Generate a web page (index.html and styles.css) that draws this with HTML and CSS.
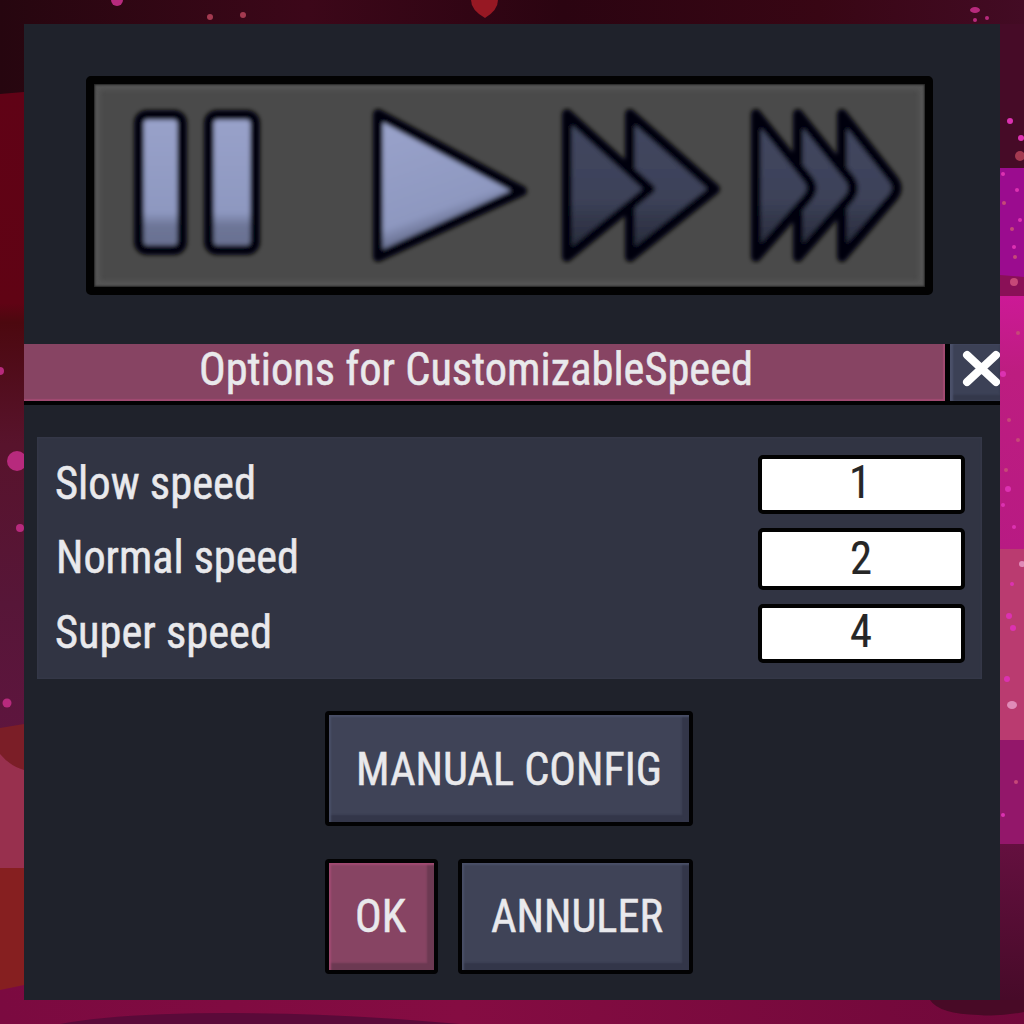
FILE: index.html
```html
<!DOCTYPE html>
<html lang="en">
<head>
<meta charset="utf-8">
<title>Options for CustomizableSpeed</title>
<link rel="stylesheet" href="styles.css">
</head>
<body>
<svg class="backdrop" viewBox="0 0 1024 1024" aria-hidden="true">
  <defs>
    <linearGradient id="topG"><stop offset="0" stop-color="#26060f"/><stop offset=".3" stop-color="#3c0719"/><stop offset=".55" stop-color="#2b0411"/><stop offset=".8" stop-color="#380614"/><stop offset="1" stop-color="#430b24"/></linearGradient>
    <linearGradient id="leftG" x2="0" y2="1"><stop offset="0" stop-color="#600216"/><stop offset=".33" stop-color="#600314"/><stop offset=".36" stop-color="#4c080f"/><stop offset=".55" stop-color="#58132c"/><stop offset=".8" stop-color="#571638"/><stop offset="1" stop-color="#5e153e"/></linearGradient>
    <linearGradient id="pinkG" x2="0" y2="1"><stop offset="0" stop-color="#cc1996"/><stop offset=".3" stop-color="#bd1d80"/><stop offset="1" stop-color="#b81a83"/></linearGradient>
    <linearGradient id="lowG" x2="0" y2="1"><stop offset="0" stop-color="#64103f"/><stop offset="1" stop-color="#460a28"/></linearGradient>
    <linearGradient id="botG"><stop offset="0" stop-color="#7b0a40"/><stop offset=".45" stop-color="#850c42"/><stop offset="1" stop-color="#70083a"/></linearGradient>
  </defs>
  <rect width="1024" height="1024" fill="url(#topG)"/>
  <path d="M0 94l24-2v640H0z" fill="url(#leftG)"/>
  <path d="M0 728l24-4v60H0z" fill="#7b1e27"/>
  <path d="M0 754q10 12 24 16v110H0z" fill="#98304e"/>
  <path d="M0 868h24v124H0z" fill="#861f20"/>
  <path d="M1000 24h24v150h-24z" fill="#460b27"/>
  <path d="M1000 168h24v112h-24z" fill="#9b0c8f"/>
  <path d="M1000 275l24 2v25h-24z" fill="#8a1057"/>
  <path d="M1000 296h24v255h-24z" fill="url(#pinkG)"/>
  <path d="M1000 549h24v192h-24z" fill="#ba3b70"/>
  <path d="M1000 740h24v105h-24z" fill="#93176a"/>
  <path d="M1000 844h24v160h-24z" fill="url(#lowG)"/>
  <path d="M0 990l24-5v15h1000v24H0z" fill="url(#botG)"/>
  <path d="M60 1024q60-11 170-11t230 11z" fill="#5a0a39"/>
  <path d="M930 1000h94v12q-25 5-45 3-40-1-49-15z" fill="#480a26"/>
  <path d="M471 0h27q0 10-13 18-14-8-14-18z" fill="#971823"/>
  <g fill="#b72a7d">
    <circle cx="117" cy="0" r="6"/><circle cx="0" cy="371" r="4"/><ellipse cx="17" cy="461" rx="10" ry="10"/><circle cx="20" cy="528" r="4"/><circle cx="7" cy="703" r="4.500"/>
    <ellipse cx="975" cy="10" rx="5" ry="3"/><circle cx="975" cy="20" r="2"/><circle cx="987" cy="18" r="2"/>
  </g>
  <g fill="#a33a50"><circle cx="210" cy="17" r="3"/><circle cx="243" cy="15" r="3"/><ellipse cx="1020" cy="156" rx="5" ry="5"/></g>
  <g fill="#dc32b1"><circle cx="1010" cy="121" r="3"/><circle cx="1021" cy="138" r="3"/><circle cx="1003" cy="174" r="2"/><circle cx="1017" cy="190" r="2"/><circle cx="1014" cy="247" r="2"/><circle cx="1020" cy="220" r="2"/><circle cx="1008" cy="489" r="3"/><circle cx="1003" cy="374" r="3"/><circle cx="1014" cy="527" r="2"/><circle cx="1003" cy="505" r="2"/><circle cx="1012" cy="584" r="2"/><circle cx="1009" cy="616" r="3"/><circle cx="1013" cy="628" r="3"/><circle cx="1007" cy="679" r="3"/><circle cx="1003" cy="815" r="2"/></g>
  <g fill="#c64878"><circle cx="1012" cy="229" r="2"/><circle cx="1015" cy="257" r="2"/><circle cx="1004" cy="203" r="2"/><circle cx="1014" cy="282" r="4"/><circle cx="1018" cy="333" r="2"/><circle cx="1009" cy="420" r="2"/><circle cx="1018" cy="440" r="2"/><circle cx="1006" cy="470" r="2"/><circle cx="1016" cy="782" r="2"/></g>
  <ellipse cx="1012" cy="705" rx="5" ry="4" fill="#e08bb8"/><circle cx="1022" cy="564" r="3" fill="#e08bb8"/>
</svg>

<main class="window">
  <section class="speed-area">
    <div class="speed-bar">
      <svg class="speed-icons" viewBox="0 0 831 203" role="img" aria-label="Pause, play, fast, fastest">
        <defs>
          <linearGradient id="lit" gradientUnits="userSpaceOnUse" x1="0" y1="30" x2="0" y2="170"><stop offset="0" stop-color="#99a2ca"/><stop offset=".7" stop-color="#8e98c0"/><stop offset=".8" stop-color="#6d7597"/><stop offset="1" stop-color="#696f8e"/></linearGradient>
          <linearGradient id="play" gradientUnits="userSpaceOnUse" x1="320" y1="30" x2="365" y2="154"><stop offset="0" stop-color="#99a2ca"/><stop offset=".74" stop-color="#8e98c0"/><stop offset=".86" stop-color="#6d7597"/><stop offset="1" stop-color="#5a607c"/></linearGradient>
          <linearGradient id="dim" gradientUnits="userSpaceOnUse" x1="0" y1="30" x2="0" y2="170"><stop offset="0" stop-color="#424760"/><stop offset=".6" stop-color="#3d4259"/><stop offset=".8" stop-color="#303447"/><stop offset="1" stop-color="#252938"/></linearGradient>
          <filter id="soft" x="-5%" y="-5%" width="110%" height="110%"><feGaussianBlur stdDeviation="1.900"/></filter>
        </defs>
        <g class="glyphs" filter="url(#soft)">
          <rect class="lit" x="45" y="31" width="43" height="135" rx="8"/>
          <rect class="lit" x="115" y="31" width="46" height="135" rx="8"/>
          <path class="play" d="M284 30V173L428 107Z"/>
          <path class="dim" d="M536 30L621 105L536 173Z"/>
          <path class="dim" d="M473 30V173L556 105Z"/>
          <path class="dim" d="M748 30L799 95Q806 104 799 113L748 173Z"/>
          <path class="dim" d="M704 30L756 95Q762 104 756 113L704 173Z"/>
          <path class="dim" d="M662 30V173L714 113Q721 104 714 95Z"/>
        </g>
      </svg>
    </div>
  </section>

  <header class="titlebar">
    <h1 class="title">
      <svg class="label" width="560" height="57"><text x="6" y="41" textLength="554" lengthAdjust="spacingAndGlyphs">Options for CustomizableSpeed</text></svg>
    </h1>
    <button class="close" aria-label="Close">
      <svg width="50" height="57" viewBox="0 0 50 57"><path d="M17 11L46 38M46 11L17 38" stroke="#fff" stroke-width="8" stroke-linecap="round"/></svg>
    </button>
  </header>

  <section class="options">
    <div class="row">
      <svg class="label" width="300" height="60"><text x="-2" y="44" textLength="201" lengthAdjust="spacingAndGlyphs">Slow speed</text></svg>
      <div class="field"><svg class="label" width="24" height="50"><text x="-1" y="39" textLength="22" lengthAdjust="spacingAndGlyphs">1</text></svg></div>
    </div>
    <div class="row row-mid">
      <svg class="label" width="300" height="60"><text x="-1" y="45" textLength="243" lengthAdjust="spacingAndGlyphs">Normal speed</text></svg>
      <div class="field"><svg class="label" width="24" height="50"><text x="0" y="42" textLength="22" lengthAdjust="spacingAndGlyphs">2</text></svg></div>
    </div>
    <div class="row">
      <svg class="label" width="300" height="60"><text x="-2" y="44" textLength="217" lengthAdjust="spacingAndGlyphs">Super speed</text></svg>
      <div class="field"><svg class="label" width="24" height="50"><text x="0" y="39" textLength="22" lengthAdjust="spacingAndGlyphs">4</text></svg></div>
    </div>
  </section>

  <footer class="actions">
    <button class="btn wide"><svg class="label" width="310" height="60"><text x="-1" y="46" textLength="306" lengthAdjust="spacingAndGlyphs">MANUAL CONFIG</text></svg></button>
    <button class="btn primary"><svg class="label" width="52" height="60"><text x="-2" y="45" textLength="51" lengthAdjust="spacingAndGlyphs">OK</text></svg></button>
    <button class="btn cancel"><svg class="label" width="174" height="60"><text x="1" y="45" textLength="172" lengthAdjust="spacingAndGlyphs">ANNULER</text></svg></button>
  </footer>
</main>
</body>
</html>
```
FILE: styles.css
```css
* { box-sizing: border-box; }
body {
  margin: 0;
  width: 1024px;
  height: 1024px;
  padding: 24px;
  overflow: hidden;
  font-family: "Roboto Condensed", Roboto, sans-serif;
}
button { padding: 0; border: 0; font: inherit; }
svg { display: block; }
.backdrop { position: absolute; top: 0; left: 0; width: 1024px; height: 1024px; z-index: -1; }
.window {
  width: 976px;
  height: 976px;
  background: #1f222b;
  display: flex;
  flex-direction: column;
  overflow: hidden;
}
.speed-area { height: 320px; padding: 52px 67px 49px 62px; }
.speed-bar {
  height: 219px;
  border: 8px solid #020202;
  border-radius: 5px;
  background: #4a4a4a;
  box-shadow: inset 0 0 2px 1px #222, inset 0 0 5px 6px #565656;
}
.speed-icons { width: 831px; height: 203px; }
.glyphs { stroke: #040508; stroke-width: 10; stroke-linejoin: round; }
.lit { fill: url(#lit); }
.play { fill: url(#play); }
.dim { fill: url(#dim); }
.label { flex: none; overflow: visible; fill: #e9e9ec; stroke: #e9e9ec; stroke-width: .5; font-size: 46px; font-weight: 400; }
.titlebar { display: flex; height: 61px; background: #020203; border-bottom: 4px solid #020203; }
.title {
  margin: 0;
  width: 921px;
  padding-left: 169px;
  background: #874463;
  box-shadow: inset -2px -2px 1px #a24b72;
}
.close { margin-left: 5px; width: 50px; background: #3c4156; box-shadow: inset 3px 0 2px #4b516a, inset 0 -6px 2px #34384b; overflow: hidden; }
.options {
  margin: 32px 18px 0 13px;
  height: 242px;
  padding: 18px 17px 0 20px;
  background: #313443;
  box-shadow: inset 0 0 2px 1px #353a4a;
  display: flex;
  flex-direction: column;
  gap: 14px;
}
.row { display: flex; justify-content: space-between; height: 59px; }
.row-mid { height: 62px; }
.field {
  width: 207px;
  height: 100%;
  border: 4px solid #020202;
  border-radius: 5px;
  background: #fff;
  display: flex;
  justify-content: center;
}
.field .label { fill: #262626; stroke: #262626; stroke-width: .2; }
.actions {
  margin: 32px 0 0 301px;
  display: grid;
  grid-template-columns: 113px 235px;
  grid-auto-rows: 115px;
  gap: 33px 20px;
}
.btn {
  border: 4px solid #020203;
  border-radius: 4px;
  background: #3f4357;
  box-shadow: inset 2px 2px 2px #4a5068, inset -7px -7px 2px #333649;
  display: flex;
  align-items: flex-start;
  padding: 24px 0 0 28px;
}
.wide { grid-column: 1 / 3; }
.primary { background: #874463; box-shadow: inset 2px 2px 2px #a24b72, inset -7px -7px 2px #6c3952; }
```
